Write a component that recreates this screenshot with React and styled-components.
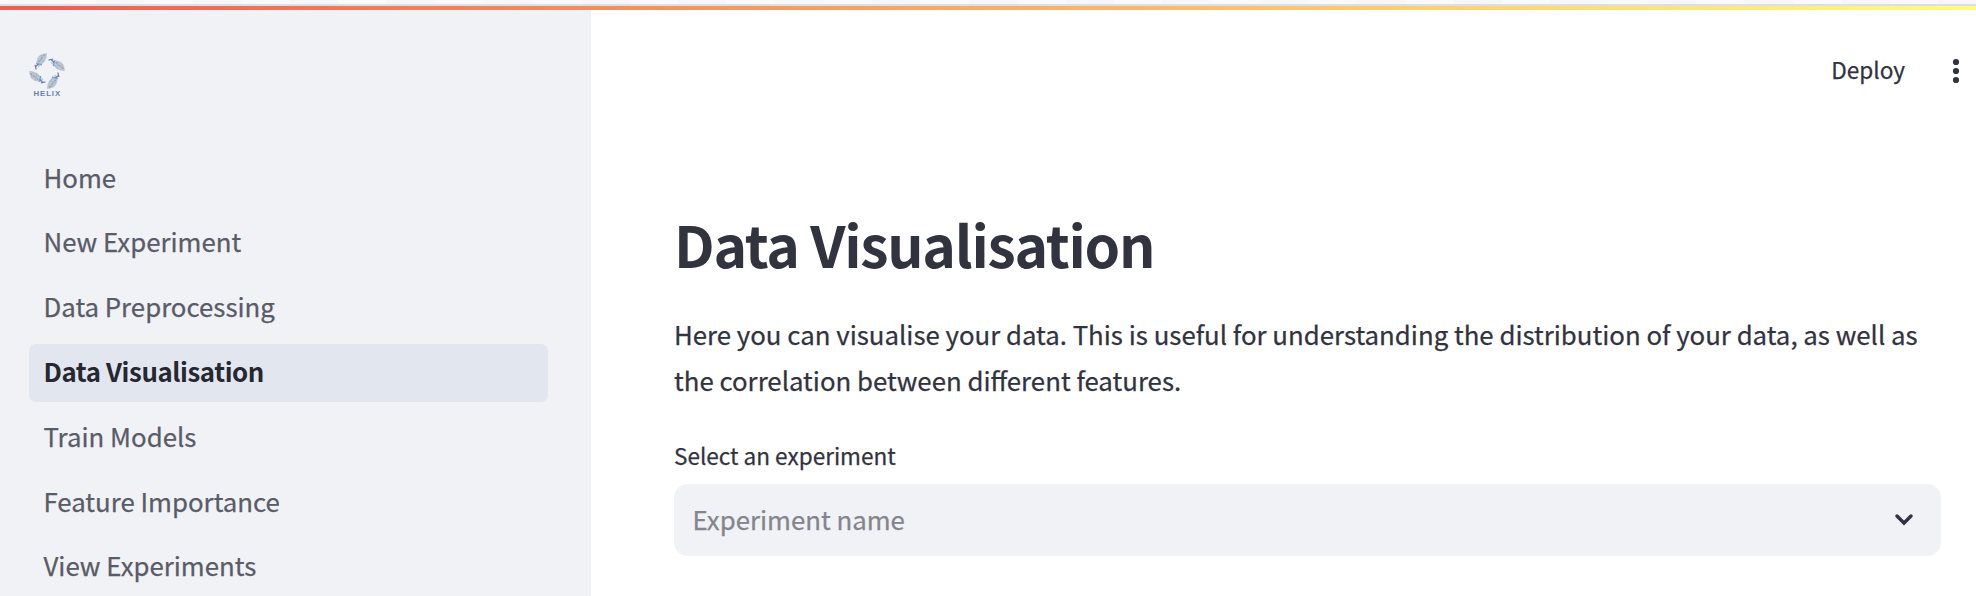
import React from "react";
import styled, { createGlobalStyle } from "styled-components";

const GlobalStyle = createGlobalStyle`
  * { box-sizing: border-box; }
  html, body, #root { height: 100%; }
  body {
    margin: 0;
    overflow: hidden;
    background: #ffffff;
    color: #31333f;
    font-family: "Noto Sans CJK JP", "Open Sans", sans-serif;
    font-size: 25.8px;
    -webkit-text-stroke: 0.25px currentColor;
  }
`;

const Page = styled.div`
  display: flex;
  flex-direction: column;
  height: 100%;
`;

const BrowserEdge = styled.div`
  flex: none;
  height: 6px;
  border-bottom: 2px solid #dfdfe2;
  background: repeating-linear-gradient(
    60deg,
    #f7f7f9 0 42px,
    #fafafc 42px 84px
  );
`;

const Decoration = styled.div`
  flex: none;
  height: 4px;
  background: linear-gradient(90deg, #ed5c54, #fffd80);
`;

const Body = styled.div`
  flex: 1;
  min-height: 0;
  display: flex;
`;

const Sidebar = styled.aside`
  flex: none;
  width: 591px;
  padding: 42px 43px 0 29px;
  background: #f0f2f6;
  overflow: hidden;
`;

const LogoLink = styled.a`
  display: block;
  height: 97.6px;
`;

const Nav = styled.nav`
  display: flex;
  flex-direction: column;
  gap: 7.2px;
`;

const NavItem = styled.a`
  flex: none;
  height: 57.6px;
  padding: 0 15px 3px 14.5px;
  border-radius: 7px;
  line-height: 54.4px;
  color: ${(p) => (p.$active ? "#262730" : "#595b67")};
  background: ${(p) => (p.$active ? "#e2e7ef" : "transparent")};
  font-weight: ${(p) => (p.$active ? 700 : 400)};
  letter-spacing: ${(p) => (p.$active ? "-0.4px" : "normal")};
  -webkit-text-stroke-width: ${(p) => (p.$active ? "0" : "0.25px")};
`;

const Main = styled.main`
  flex: 1;
  min-width: 0;
`;

const Header = styled.header`
  display: flex;
  justify-content: flex-end;
  align-items: flex-start;
  gap: 43px;
  height: 198px;
  padding: 45px 12px 0 0;
`;

const DeployButton = styled.button`
  padding: 0;
  border: 0;
  background: none;
  color: inherit;
  font: inherit;
  font-size: 22.6px;
  line-height: 30px;
`;

const MenuIcon = styled.svg`
  width: 16px;
  height: 28px;
  margin-top: 2px;
  fill: #31333f;
`;

const Content = styled.section`
  padding: 0 35px 0 83px;
`;

const Title = styled.h1`
  margin: 0 0 33px;
  font-size: 57px;
  font-weight: 700;
  line-height: 70px;
  letter-spacing: -1.27px;
  -webkit-text-stroke-width: 0;
`;

const Intro = styled.p`
  margin: 0 0 36px;
  line-height: 46px;
`;

const Label = styled.label`
  display: block;
  margin-bottom: 13px;
  font-size: 22.55px;
  line-height: 32px;
`;

const Select = styled.div`
  display: flex;
  align-items: center;
  justify-content: space-between;
  height: 72px;
  padding: 0 28px 0 18.5px;
  border-radius: 14px;
  background: #f0f2f6;
`;

const Placeholder = styled.span`
  padding-bottom: 3px;
  line-height: 40px;
  color: #83858c;
`;

const Chevron = styled.svg`
  width: 18px;
  height: 12px;
  fill: none;
  stroke: #31333f;
  stroke-width: 3.4;
  stroke-linecap: round;
`;

const LogoSvg = styled.svg`
  display: block;
  width: 36px;
  height: 46px;
`;

const pages = [
  "Home",
  "New Experiment",
  "Data Preprocessing",
  "Data Visualisation",
  "Train Models",
  "Feature Importance",
  "View Experiments",
];

function Logo() {
  return (
    <LogoSvg viewBox="0 0 36 46" aria-label="Helix">
      {[0, 90, 180, 270].map((angle) => (
        <g key={angle} transform={`rotate(${angle} 18 19)`} fill="none">
          <path d="M18 1.2C12 1.2 8.5 4 7.8 8.5L6.8 12L11 13.2C15.5 11 18 6.5 18 1.2Z" fill="#bcc8d8" />
          <path d="M16 2.6C11 4.5 14.5 7.5 9 10" stroke="#8ea3c6" strokeWidth="1.2" />
          <path d="M11 3.5L17 5.5M8.8 7L15 9.5" stroke="#c3bbb2" strokeWidth="1.1" />
          <path d="M15.5 7.5L12 12" stroke="#a3bedf" strokeWidth="1.2" />
          <path d="M7.5 11.5L13 12.8" stroke="#7f9fce" strokeWidth="1.3" />
          <path d="M6.5 14.8L9.5 12M6 12.8L7.2 17.5" stroke="#7779b0" strokeWidth="1.2" />
          <path d="M9 15L11 13" stroke="#a3d2ef" strokeWidth="1.6" />
        </g>
      ))}
      <text
        x="4.6"
        y="44"
        textLength="26.5"
        fontFamily="Liberation Sans"
        fontSize="7.8"
        fontWeight="700"
        fill="#6283b8"
        strokeWidth="0"
      >
        HELIX
      </text>
    </LogoSvg>
  );
}

export default function App() {
  return (
    <Page>
      <GlobalStyle />
      <BrowserEdge />
      <Decoration />
      <Body>
        <Sidebar>
          <LogoLink>
            <Logo />
          </LogoLink>
          <Nav>
            {pages.map((page) => (
              <NavItem key={page} $active={page === "Data Visualisation"}>
                {page}
              </NavItem>
            ))}
          </Nav>
        </Sidebar>
        <Main>
          <Header>
            <DeployButton>Deploy</DeployButton>
            <MenuIcon viewBox="0 0 16 28">
              <circle cx="8" cy="5" r="3.1" />
              <circle cx="8" cy="14" r="3.1" />
              <circle cx="8" cy="23" r="3.1" />
            </MenuIcon>
          </Header>
          <Content>
            <Title>Data Visualisation</Title>
            <Intro>
              Here you can visualise your data. This is useful for understanding the
              distribution of your data, as well as the correlation between different
              features.
            </Intro>
            <Label>Select an experiment</Label>
            <Select>
              <Placeholder>Experiment name</Placeholder>
              <Chevron viewBox="0 0 18 12">
                <path d="M2 2L9 9L16 2" />
              </Chevron>
            </Select>
          </Content>
        </Main>
      </Body>
    </Page>
  );
}
